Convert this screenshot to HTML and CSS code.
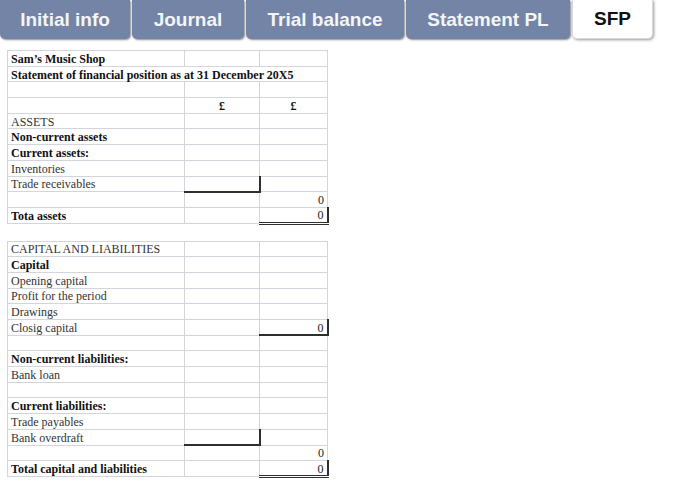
FILE: index.html
```html
<!DOCTYPE html>
<html>
<head>
<meta charset="utf-8">
<link rel="stylesheet" href="styles.css">
</head>
<body>
<nav class="tabs">
  <div class="tab tab-initial">Initial info</div>
  <div class="tab tab-journal">Journal</div>
  <div class="tab tab-trial">Trial balance</div>
  <div class="tab tab-pl">Statement PL</div>
  <div class="tab tab-sfp active">SFP</div>
</nav>
<main class="sheet">
  <table class="grid">
    <colgroup><col class="c1"><col class="c2"><col class="c3"></colgroup>
    <tr><td class="b">Sam’s Music Shop</td><td></td><td></td></tr>
    <tr><td class="b nowrap" colspan="3">Statement of financial position as at 31 December 20X5</td></tr>
    <tr><td></td><td></td><td></td></tr>
    <tr><td></td><td class="b ctr">£</td><td class="b ctr">£</td></tr>
    <tr><td>ASSETS</td><td></td><td></td></tr>
    <tr><td class="b">Non-current assets</td><td></td><td></td></tr>
    <tr><td class="b">Current assets:</td><td></td><td></td></tr>
    <tr><td>Inventories</td><td></td><td></td></tr>
    <tr><td>Trade receivables</td><td class="sub"></td><td></td></tr>
    <tr><td></td><td></td><td class="num">0</td></tr>
    <tr><td class="b">Tota assets</td><td></td><td class="num tot">0</td></tr>
  </table>
  <table class="grid second">
    <colgroup><col class="c1"><col class="c2"><col class="c3"></colgroup>
    <tr><td>CAPITAL AND LIABILITIES</td><td></td><td></td></tr>
    <tr><td class="b">Capital</td><td></td><td></td></tr>
    <tr><td>Opening capital</td><td></td><td></td></tr>
    <tr><td>Profit for the period</td><td></td><td></td></tr>
    <tr><td>Drawings</td><td></td><td></td></tr>
    <tr><td>Closig capital</td><td></td><td class="num sub">0</td></tr>
    <tr><td></td><td></td><td></td></tr>
    <tr><td class="b">Non-current liabilities:</td><td></td><td></td></tr>
    <tr><td>Bank loan</td><td></td><td></td></tr>
    <tr><td></td><td></td><td></td></tr>
    <tr><td class="b">Current liabilities:</td><td></td><td></td></tr>
    <tr><td>Trade payables</td><td></td><td></td></tr>
    <tr><td>Bank overdraft</td><td class="sub"></td><td></td></tr>
    <tr><td></td><td></td><td class="num">0</td></tr>
    <tr><td class="b">Total capital and liabilities</td><td></td><td class="num tot">0</td></tr>
  </table>
</main>
</body>
</html>
```

FILE: styles.css
```css
html, body {
  margin: 0;
  padding: 0;
  background: #ffffff;
}

.tabs {
  display: flex;
  gap: 2px;
  height: 40px;
  font-family: "Liberation Sans", Arial, sans-serif;
}

.tab {
  box-sizing: border-box;
  height: 39px;
  display: flex;
  align-items: center;
  justify-content: center;
  background: #7384a6;
  color: #f4f5f8;
  font-weight: bold;
  font-size: 19px;
  border-radius: 0 0 5px 5px;
  box-shadow: 1px 1px 2px rgba(0, 0, 0, 0.45);
}

.tab-initial { width: 130px; }
.tab-journal { width: 112px; }
.tab-trial { width: 158px; }
.tab-pl { width: 164px; }
.tab-sfp { width: 81px; }

.tab.active {
  background: #ffffff;
  color: #111111;
  box-shadow: 1px 1px 3px rgba(0, 0, 0, 0.4);
  border: 1px solid #d8d8dc;
  border-top: none;
}

.sheet {
  padding: 10px 0 0 7px;
  font-family: "Liberation Serif", "Times New Roman", serif;
  font-size: 12px;
  color: #333333;
}

.grid {
  border-collapse: collapse;
  table-layout: fixed;
  width: 320px;
}

.grid.second {
  margin-top: 16px;
}

.c1 { width: 177px; }
.c2 { width: 75px; }
.c3 { width: 68px; }

.grid tr {
  height: 15.7px;
}

.grid td {
  padding: 1px 3px 0 3px;
  line-height: 12px;
  border: 1px solid #d3d4dc;
  vertical-align: middle;
  white-space: nowrap;
  overflow: visible;
}

.grid td.b {
  font-weight: bold;
  color: #111111;
}

.grid td.ctr {
  text-align: center;
}

.grid td.num {
  text-align: right;
  color: #222222;
}

.grid td.sub {
  border-right: 2px solid #2e2e2e;
  border-bottom: 2px solid #2e2e2e;
}

.grid td.tot {
  border-right: 2px solid #2e2e2e;
  border-bottom: 3px double #2e2e2e;
}
```
